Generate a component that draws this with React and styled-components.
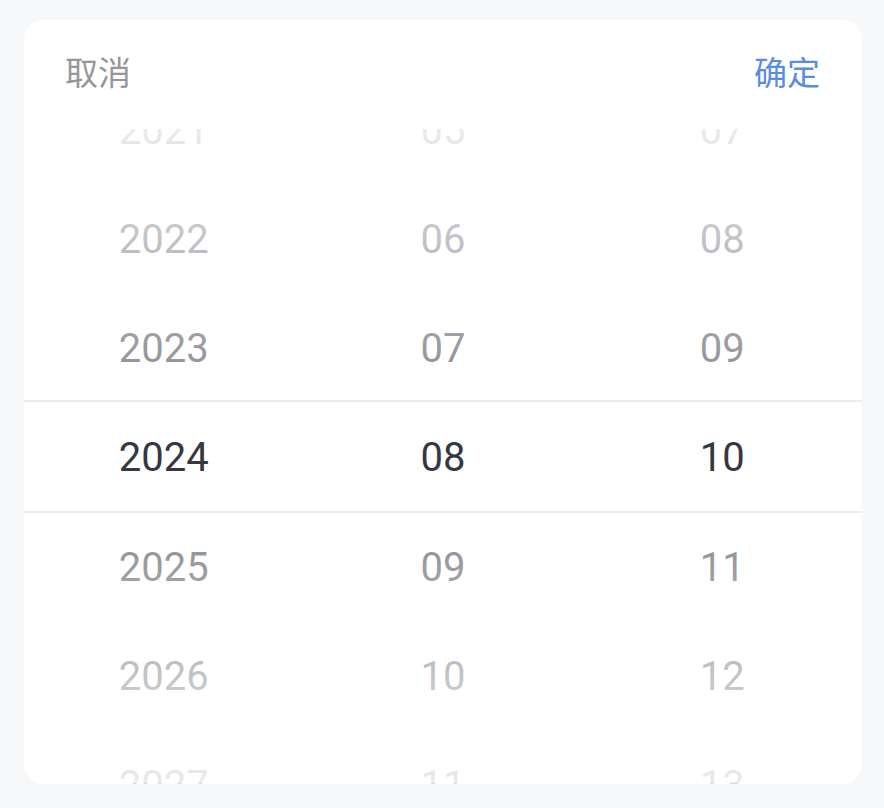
import React from "react"
import styled, { createGlobalStyle } from "styled-components"

const ITEM = 655 / 6

const GlobalStyle = createGlobalStyle`
  html, body {
    margin: 0;
    background: #f7f8fa;
  }
  * {
    box-sizing: border-box;
  }
`

const Page = styled.div`
  height: 808px;
  padding: 20px 22px 24px 24px;
`

const Card = styled.div`
  display: flex;
  flex-direction: column;
  height: 100%;
  background: #fff;
  border-radius: 20px;
  overflow: hidden;
`

const Toolbar = styled.div`
  display: flex;
  align-items: center;
  justify-content: space-between;
  height: 109px;
  padding: 0 42px 6px 41px;
  flex-shrink: 0;
`

const Action = styled.button`
  border: none;
  background: none;
  padding: 0;
  font-family: "Noto Sans CJK SC", sans-serif;
  font-size: 33px;
  line-height: 1;
  color: ${props => props.confirm ? "#5a8ce2" : "#969799"};
  cursor: pointer;
`

const Columns = styled.div`
  position: relative;
  display: flex;
  height: 655px;
  overflow: hidden;
`

const Column = styled.ul`
  flex: 1;
  margin: 0;
  padding: 0;
  list-style: none;
  transform: translateY(${-ITEM / 2 + 1.5}px);
`

const Option = styled.li`
  height: ${ITEM}px;
  line-height: ${ITEM}px;
  text-align: center;
  font-family: Roboto, "Noto Sans", sans-serif;
  font-size: 40px;
  color: #343842;
`

const Mask = styled.div`
  position: absolute;
  inset: 0;
  z-index: 2;
  pointer-events: none;
  background-image:
    linear-gradient(180deg, rgba(255, 255, 255, 0.9), rgba(255, 255, 255, 0.4)),
    linear-gradient(0deg, rgba(255, 255, 255, 0.9), rgba(255, 255, 255, 0.4));
  background-position: top, bottom;
  background-size: 100% ${(655 - ITEM) / 2}px;
  background-repeat: no-repeat;
`

const Frame = styled.div`
  position: absolute;
  left: 0;
  right: 0;
  top: calc(50% - 56.5px);
  height: 113px;
  z-index: 3;
  pointer-events: none;
  border-top: 2px solid #ebedf0;
  border-bottom: 2px solid #ebedf0;
`

const range = (from, count) =>
  Array.from({ length: count }, (_, i) => String(from + i).padStart(2, "0"))

const columns = [range(2021, 7), range(5, 7), range(7, 7)]

export default function App() {
  return (
    <>
      <GlobalStyle />
      <Page>
        <Card>
          <Toolbar>
            <Action>取消</Action>
            <Action confirm>确定</Action>
          </Toolbar>
          <Columns>
            {columns.map((items, i) => (
              <Column key={i}>
                {items.map(v => <Option key={v}>{v}</Option>)}
              </Column>
            ))}
            <Mask />
            <Frame />
          </Columns>
        </Card>
      </Page>
    </>
  )
}
